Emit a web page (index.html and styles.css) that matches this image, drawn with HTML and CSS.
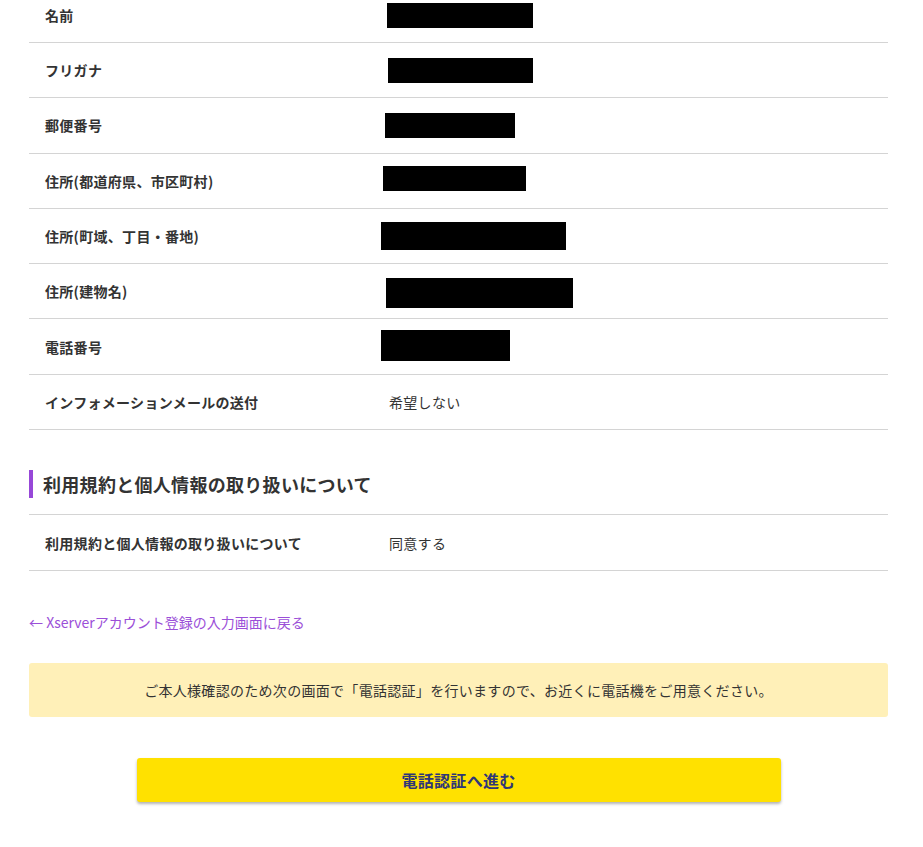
FILE: index.html
```html
<!DOCTYPE html>
<html lang="ja">
<head>
<meta charset="utf-8">
<title>確認</title>
<link rel="stylesheet" href="styles.css">
</head>
<body>
<main class="page">
  <div class="table table-first">
    <div class="row"><div class="label">名前</div><div class="value"><span class="redact" style="width:146px;height:25px;margin-left:-2px;margin-top:2px"></span></div></div>
    <div class="row"><div class="label">フリガナ</div><div class="value"><span class="redact" style="width:145px;height:25px;margin-left:-1px;margin-top:1px"></span></div></div>
    <div class="row"><div class="label">郵便番号</div><div class="value"><span class="redact" style="width:130px;height:25px;margin-left:-4px;margin-top:1px"></span></div></div>
    <div class="row"><div class="label">住所(都道府県、市区町村)</div><div class="value"><span class="redact" style="width:143px;height:25px;margin-left:-6px;margin-top:-4px"></span></div></div>
    <div class="row"><div class="label">住所(町域、丁目・番地)</div><div class="value"><span class="redact" style="width:185px;height:28px;margin-left:-8px;margin-top:-1px"></span></div></div>
    <div class="row"><div class="label">住所(建物名)</div><div class="value"><span class="redact" style="width:187px;height:30px;margin-left:-3px;margin-top:3px"></span></div></div>
    <div class="row"><div class="label">電話番号</div><div class="value"><span class="redact" style="width:129px;height:31px;margin-left:-8px;margin-top:-3px"></span></div></div>
    <div class="row"><div class="label">インフォメーションメールの送付</div><div class="value">希望しない</div></div>
  </div>

  <h2 class="section-title">利用規約と個人情報の取り扱いについて</h2>

  <div class="table table-bordered">
    <div class="row"><div class="label">利用規約と個人情報の取り扱いについて</div><div class="value">同意する</div></div>
  </div>

  <a class="back-link" href="#">← Xserverアカウント登録の入力画面に戻る</a>

  <div class="notice">ご本人様確認のため次の画面で「電話認証」を行いますので、お近くに電話機をご用意ください。</div>

  <div class="actions">
    <button class="btn-primary" type="button">電話認証へ進む</button>
  </div>
</main>
</body>
</html>
```

FILE: styles.css
```css
* { box-sizing: border-box; }
html, body { margin: 0; padding: 0; background: #fff; }
body {
  font-family: "Noto Sans CJK JP", "Noto Sans", "Liberation Sans", sans-serif;
  color: #333;
  font-size: 14px;
  letter-spacing: 0.3px;
}
.page {
  width: 859px;
  margin: -12.3px 0 0 29px;
  padding-bottom: 40px;
}
.table-bordered { border-top: 1px solid #d4d4d4; }
.row {
  display: grid;
  grid-template-columns: 360px 1fr;
  align-items: center;
  height: 55.3px;
  border-bottom: 1px solid #d4d4d4;
}
.table-bordered .row { height: 56px; }
.label {
  padding-left: 16px;
  font-weight: bold;
  line-height: 20px;
  color: #333;
}
.value {
  line-height: 20px;
  color: #333;
  display: flex;
  align-items: center;
}
.redact {
  display: inline-block;
  background: #000;
}
.section-title {
  margin: 40px 0 16px;
  border-left: 4px solid #9747d8;
  padding-left: 10px;
  font-size: 18px;
  line-height: 28px;
  height: 28px;
  font-weight: bold;
  color: #333;
  letter-spacing: 0.3px;
}
.back-link {
  display: block;
  margin-top: 41px;
  line-height: 20px;
  color: #9b4fd8;
  text-decoration: none;
  letter-spacing: 0;
}
.notice {
  margin-top: 31px;
  height: 54px;
  background: #fff0b8;
  border-radius: 3px;
  display: flex;
  align-items: center;
  justify-content: center;
  color: #333;
}
.actions {
  margin-top: 41px;
  display: flex;
  justify-content: center;
}
.btn-primary {
  width: 644px;
  height: 44px;
  border: 0;
  border-radius: 3px;
  background: #ffe100;
  box-shadow: 0 2px 3px rgba(0, 0, 0, 0.3);
  font-family: inherit;
  font-size: 16px;
  font-weight: bold;
  color: #2f3678;
  letter-spacing: 0.3px;
  cursor: pointer;
}
```
